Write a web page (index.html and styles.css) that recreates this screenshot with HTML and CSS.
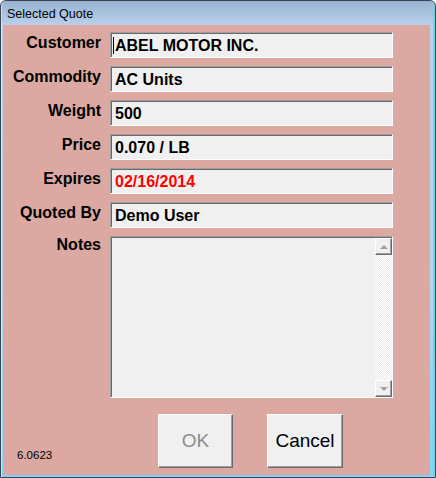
FILE: index.html
```html
<!DOCTYPE html>
<html lang="en">
<head>
<meta charset="utf-8">
<title>Selected Quote</title>
<link rel="stylesheet" href="styles.css">
</head>
<body>
<div class="window">
  <div class="titlebar">Selected Quote</div>
  <div class="client">
    <div class="form">
      <div class="label">Customer</div>
      <div class="field"><span class="caret"></span>ABEL MOTOR INC.</div>
      <div class="label">Commodity</div>
      <div class="field">AC Units</div>
      <div class="label">Weight</div>
      <div class="field">500</div>
      <div class="label">Price</div>
      <div class="field">0.070 / LB</div>
      <div class="label">Expires</div>
      <div class="field expired">02/16/2014</div>
      <div class="label">Quoted By</div>
      <div class="field">Demo User</div>
      <div class="label notes-label">Notes</div>
      <div class="notes">
        <div class="notes-text"></div>
        <div class="scrollbar">
          <div class="sb-btn"><span class="arrow up"></span></div>
          <div class="sb-track"></div>
          <div class="sb-btn"><span class="arrow down"></span></div>
        </div>
      </div>
    </div>
    <div class="footer">
      <div class="version">6.0623</div>
      <div class="buttons">
        <div class="btn disabled">OK</div>
        <div class="btn">Cancel</div>
      </div>
    </div>
  </div>
</div>
</body>
</html>
```
FILE: styles.css
```css
html, body {
  margin: 0;
  padding: 0;
  background: #ffffff;
}

.window {
  width: 436px;
  height: 478px;
  box-sizing: border-box;
  border: 1px solid #3a4658;
  border-radius: 6px 6px 0 0;
  background: linear-gradient(#97b2d1 0, #bad1ea 24px, #b4d6ee 60%, #7fd6f4 100%);
  box-shadow: inset -2px 0 0 #6fd2f3, inset 1px 0 0 #cfe3f4;
  display: flex;
  flex-direction: column;
  font-family: "Liberation Sans", Arial, sans-serif;
}

.titlebar {
  height: 24px;
  line-height: 26px;
  padding-left: 6px;
  font-size: 12.5px;
  color: #000;
}

.client {
  width: 427px;
  height: 450px;
  margin-left: 2px;
  background: #dba9a2;
  box-sizing: border-box;
  padding-top: 7px;
}

.form {
  display: grid;
  grid-template-columns: 98px 283px;
  column-gap: 9px;
  row-gap: 8px;
}

.label {
  text-align: right;
  font-weight: bold;
  font-size: 16px;
  color: #000;
  padding-top: 2px;
  white-space: nowrap;
}

.notes-label {
  padding-top: 0;
}

.field {
  height: 26px;
  box-sizing: border-box;
  border: 1px solid;
  border-color: #a0a0a0 #ffffff #ffffff #a0a0a0;
  box-shadow: inset 1px 1px 0 #696969;
  background: #f0f0f0;
  font-weight: bold;
  font-size: 16px;
  line-height: 23px;
  padding: 1px 0 0 4px;
  color: #000;
  white-space: nowrap;
}

.field.expired {
  color: #ff0000;
}

.caret {
  display: inline-block;
  width: 1px;
  height: 17px;
  background: #000;
  vertical-align: -3px;
  margin-left: -2px;
  margin-right: 1px;
}

.notes {
  height: 162px;
  box-sizing: border-box;
  border: 1px solid;
  border-color: #a0a0a0 #ffffff #ffffff #a0a0a0;
  box-shadow: inset 1px 1px 0 #696969;
  background: #f0f0f0;
  display: flex;
  padding: 1px 0 0 1px;
}

.notes-text {
  flex: 1;
}

.scrollbar {
  width: 17px;
  display: flex;
  flex-direction: column;
  background: repeating-conic-gradient(#ffffff 0 25%, #ebebeb 0 50%) 0 0 / 2px 2px;
}

.sb-track {
  flex: 1;
}

.sb-btn {
  height: 17px;
  box-sizing: border-box;
  border: 1px solid;
  border-color: #ffffff #696969 #696969 #ffffff;
  box-shadow: inset -1px -1px 0 #a0a0a0;
  background: #f0f0f0;
  display: flex;
  align-items: center;
  justify-content: center;
}

.arrow {
  width: 0;
  height: 0;
  border-left: 4px solid transparent;
  border-right: 4px solid transparent;
}

.arrow.up {
  border-bottom: 4px solid #a0a0a0;
}

.arrow.down {
  border-top: 4px solid #a0a0a0;
}

.footer {
  display: flex;
  align-items: flex-end;
  margin-top: 16px;
}

.version {
  width: 141px;
  padding-left: 14px;
  font-size: 11.5px;
  color: #000;
  margin-bottom: 7px;
}

.buttons {
  display: flex;
  gap: 34px;
}

.btn {
  width: 75px;
  height: 54px;
  box-sizing: border-box;
  border: 1px solid;
  border-color: #ffffff #696969 #696969 #ffffff;
  box-shadow: inset -1px -1px 0 #a0a0a0;
  background: #f0f0f0;
  font-size: 19px;
  color: #000;
  display: flex;
  align-items: center;
  justify-content: center;
}

.btn + .btn {
  width: 76px;
}

.btn.disabled {
  color: #8d8d8d;
}
```
